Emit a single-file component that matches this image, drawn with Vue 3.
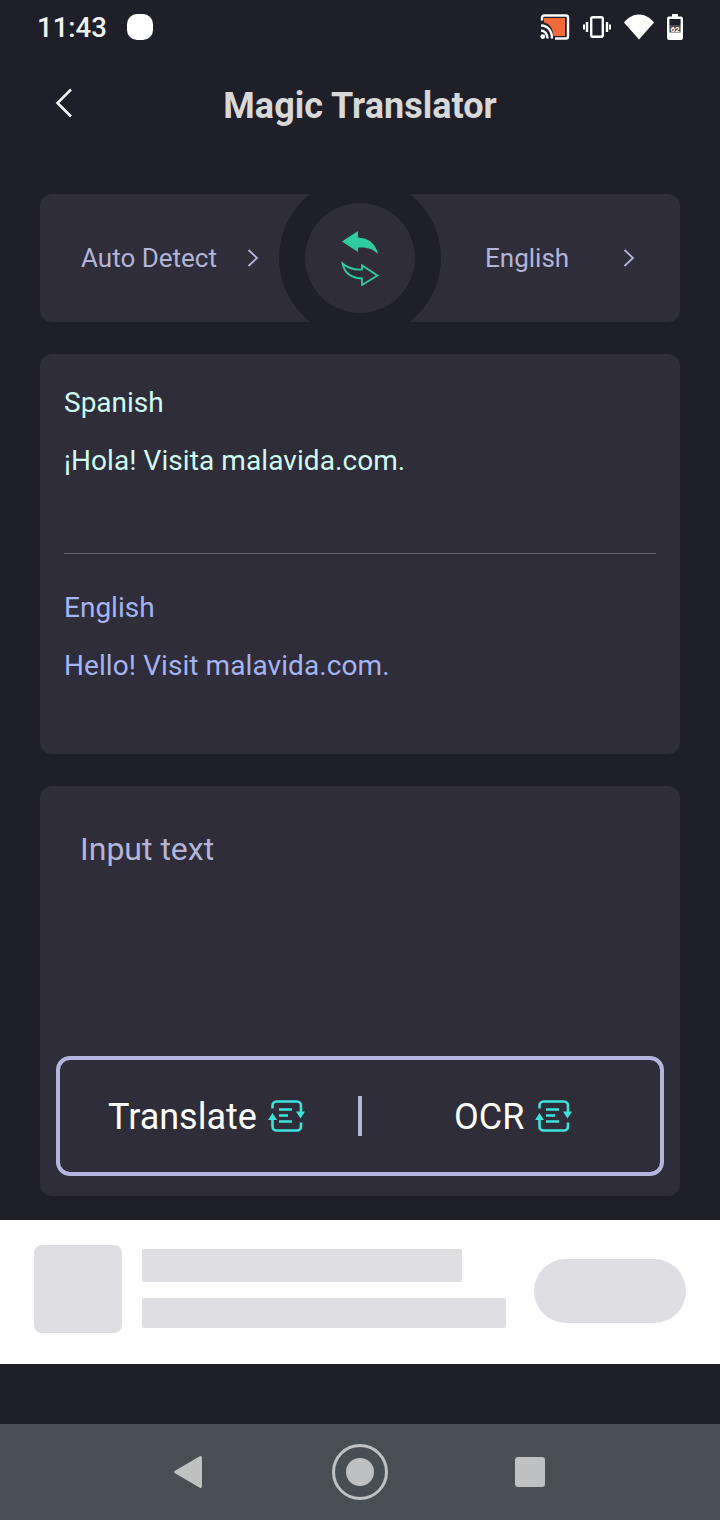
<script setup>
const statusTime = '11:43';
</script>

<template>
  <div class="screen">
    <div class="status-bar">
      <div class="status-left">
        <span class="time">{{ statusTime }}</span>
        <span class="app-dot"></span>
      </div>
      <div class="status-right">
        <svg width="30" height="26" viewBox="0 0 30 26">
          <path d="M4 1.500h22a2 2 0 0 1 2 2v19a2 2 0 0 1-2 2H15" fill="none" stroke="#fff" stroke-width="2.400"/>
          <path d="M4 1.500a2 2 0 0 0-2 2v3" fill="none" stroke="#fff" stroke-width="2.400"/>
          <path d="M4 4h21v18H13.500C13 14 9 9 4 8.500z" fill="#f26a3a"/>
          <path d="M1 11.500c6.500 0 11 5 11 13M1 16.500c3.500 0 6.500 3.500 6.500 8" fill="none" stroke="#fff" stroke-width="2.400"/>
          <circle cx="2.800" cy="22.600" r="2.400" fill="#fff"/>
        </svg>
        <svg width="28" height="22" viewBox="0 0 28 22">
          <rect x="8.200" y="1.200" width="11.600" height="19.600" rx="1.600" fill="none" stroke="#fff" stroke-width="2.400"/>
          <path d="M4 6v10M24 6v10" stroke="#fff" stroke-width="2.400"/>
          <path d="M1 8.500v5M27 8.500v5" stroke="#fff" stroke-width="2"/>
        </svg>
        <svg width="30" height="26" viewBox="0 0 30 26">
          <path d="M0 8.500C4 3.500 9 .5 15 .5s11 3 15 8L15 25.500z" fill="#fff"/>
        </svg>
        <svg width="16" height="26" viewBox="0 0 16 26">
          <path d="M5 0h6v2.500h3a2 2 0 0 1 2 2V24a2 2 0 0 1-2 2H2a2 2 0 0 1-2-2V4.500a2 2 0 0 1 2-2h3z" fill="#fff"/>
          <rect x="2.400" y="5" width="11.200" height="6" fill="#1f1f2a"/>
          <rect x="2.400" y="11" width="11.200" height="7.500" fill="#1f1f2a" opacity="0.800"/>
          <text x="8" y="18" text-anchor="middle" class="battery-text">62</text>
        </svg>
      </div>
    </div>

    <header class="app-header">
      <svg class="back" width="20" height="32" viewBox="0 0 20 32">
        <path d="M17 2.500 3.500 16 17 29.500" fill="none" stroke="#f0f0f0" stroke-width="2.600"/>
      </svg>
      <h1 class="title">Magic Translator</h1>
    </header>

    <main class="content">
      <section class="card lang-card">
        <div class="lang-side lang-left">
          <span>Auto Detect</span>
          <svg class="chev" width="12" height="20" viewBox="0 0 12 20"><path d="M1.500 2l8.500 8-8.500 8" fill="none" stroke="#b4b4d6" stroke-width="1.800"/></svg>
        </div>
        <div class="lang-side lang-right">
          <span>English</span>
          <svg class="chev" width="12" height="20" viewBox="0 0 12 20"><path d="M1.500 2l8.500 8-8.500 8" fill="none" stroke="#b4b4d6" stroke-width="1.800"/></svg>
        </div>
        <div class="swap-ring">
          <div class="swap-btn">
            <svg width="40" height="56" viewBox="0 0 40 56">
              <path d="M2 11.500 18 1v6.500c11 .5 17.500 6 20 16.500-5-5-10-7-20-6.500V22z" fill="#2ecc9f"/>
              <path d="M2.500 33.500c5 4.500 10 6.500 19.500 6V35.500l15.500 10L22 55v-6.500c-10-.5-17.500-5-19.500-15z" fill="none" stroke="#2ecc9f" stroke-width="1.800"/>
            </svg>
          </div>
        </div>
      </section>

      <section class="card result-card">
        <div class="source">
          <p class="label">Spanish</p>
          <p class="line">¡Hola! Visita malavida.com.</p>
        </div>
        <div class="divider"></div>
        <div class="target">
          <p class="label">English</p>
          <p class="line">Hello! Visit malavida.com.</p>
        </div>
      </section>

      <section class="card input-card">
        <p class="placeholder">Input text</p>
        <div class="actions">
          <div class="action action-left">
            <span>Translate</span>
            <svg class="act-icon" width="37" height="32" viewBox="0 0 37 32">
              <path d="M4.500 8.500V5.500a4 4 0 0 1 4-4h20.500a4 4 0 0 1 4 4V12M33 22.500v4a4 4 0 0 1-4 4H8.500a4 4 0 0 1-4-4V19" fill="none" stroke="#3de4dc" stroke-width="2.600"/>
              <path d="M11 9.500h13M11 15.500h9M11 21.500h13" stroke="#3de4dc" stroke-width="2.400"/>
              <path d="M0 20 4.500 13 9 20zM28 11.500h9L32.500 18.500z" fill="#3de4dc"/>
            </svg>
          </div>
          <span class="action-sep"></span>
          <div class="action action-right">
            <span>OCR</span>
            <svg class="act-icon" width="37" height="32" viewBox="0 0 37 32">
              <path d="M4.500 8.500V5.500a4 4 0 0 1 4-4h20.500a4 4 0 0 1 4 4V12M33 22.500v4a4 4 0 0 1-4 4H8.500a4 4 0 0 1-4-4V19" fill="none" stroke="#3de4dc" stroke-width="2.600"/>
              <path d="M11 9.500h13M11 15.500h9M11 21.500h13" stroke="#3de4dc" stroke-width="2.400"/>
              <path d="M0 20 4.500 13 9 20zM28 11.500h9L32.500 18.500z" fill="#3de4dc"/>
            </svg>
          </div>
        </div>
      </section>
    </main>

    <aside class="ad">
      <div class="ad-thumb"></div>
      <div class="ad-lines">
        <div class="ad-line short"></div>
        <div class="ad-line long"></div>
      </div>
      <div class="ad-pill"></div>
    </aside>

    <nav class="nav-bar">
      <svg width="32" height="34" viewBox="0 0 32 34">
        <path d="M29 2.500v29a1.500 1.500 0 0 1-2.300 1.200L2 18.300a1.500 1.500 0 0 1 0-2.600L26.700 1.300A1.500 1.500 0 0 1 29 2.500z" fill="#bdc1c2"/>
      </svg>
      <div class="nav-home"><span></span></div>
      <div class="nav-square"></div>
    </nav>
  </div>
</template>

<style>
html, body { background: #1f1f2a; }
</style>

<style scoped>
.screen {
  width: 720px;
  height: 1520px;
  background: #1f1f2a;
  display: flex;
  flex-direction: column;
  font-family: Roboto, "Liberation Sans", sans-serif;
  overflow: hidden;
}

/* Status bar */
.status-bar {
  height: 52px;
  display: flex;
  align-items: center;
  justify-content: space-between;
  padding: 2px 37px 0 37px;
  box-sizing: border-box;
}
.status-left { display: flex; align-items: center; gap: 20px; }
.time { color: #f2f2f2; font-size: 27.500px; font-weight: 500; }
.app-dot { width: 26px; height: 26px; background: #fff; border-radius: 10px; }
.status-right { display: flex; align-items: center; gap: 13px; }
.battery-text { font-size: 8px; font-weight: 700; fill: #fff; font-family: Roboto, sans-serif; }

/* Header */
.app-header {
  height: 106px;
  position: relative;
  display: flex;
  align-items: center;
  justify-content: center;
  padding-top: 2px;
  box-sizing: border-box;
}
.back { position: absolute; left: 54px; top: 35px; }
.title {
  margin: 0;
  font-size: 36px;
  font-weight: 700;
  color: #d8d8d8;
}

/* Cards */
.content {
  padding: 36px 40px 24px;
  display: flex;
  flex-direction: column;
  gap: 32px;
}
.card { background: #2e2d39; border-radius: 12px; }

.lang-card {
  height: 128px;
  position: relative;
  overflow: hidden;
  display: flex;
  color: #b4b4d6;
  font-size: 26px;
}
.lang-side { display: flex; align-items: center; height: 100%; }
.lang-left { width: 219px; padding-left: 41px; justify-content: space-between; box-sizing: border-box; }
.lang-right { margin-left: 226px; width: 150px; justify-content: space-between; }
.swap-ring {
  position: absolute;
  left: 239px;
  top: -17px;
  width: 162px;
  height: 162px;
  border-radius: 50%;
  background: #1f1f2a;
  display: flex;
  align-items: center;
  justify-content: center;
}
.swap-btn {
  width: 110px;
  height: 110px;
  border-radius: 50%;
  background: #2e2d39;
  display: flex;
  align-items: center;
  justify-content: center;
}

.result-card {
  height: 400px;
  padding: 0 24px;
  box-sizing: border-box;
  font-size: 28px;
}
.source { height: 199px; color: #d0fbf2; padding-top: 33px; box-sizing: border-box; }
.target { color: #a5b4f2; padding-top: 38px; }
.divider { height: 1px; background: #605f6c; }
.label, .line { margin: 0; line-height: 32px; }
.line { margin-top: 26px; letter-spacing: 0.08px; }

.input-card {
  height: 410px;
  padding: 0 16px 20px;
  box-sizing: border-box;
  display: flex;
  flex-direction: column;
  justify-content: space-between;
}
.placeholder {
  margin: 44px 0 0 24px;
  color: #b4b4d6;
  font-size: 32px;
  line-height: 38px;
}
.actions {
  height: 120px;
  border: 4px solid #b4b4dc;
  border-radius: 14px;
  box-sizing: border-box;
  display: flex;
  align-items: center;
  color: #fff;
  font-size: 36px;
  padding-top: 2px;
}
.action { display: flex; align-items: center; gap: 11px; }
.action-left { width: 298px; padding-left: 48px; box-sizing: border-box; }
.action-sep { width: 4px; height: 40px; background: #b4b4dc; margin-top: -2px; }
.action-right { margin-left: 92px; }
.act-icon { margin-top: -3px; }

/* Ad placeholder */
.ad {
  height: 144px;
  background: #fff;
  display: flex;
  align-items: center;
  padding: 0 34px 6px;
  box-sizing: border-box;
}
.ad-thumb { width: 88px; height: 88px; background: #dfdfe3; border-radius: 8px; }
.ad-lines { margin: -1px 0 0 20px; display: flex; flex-direction: column; gap: 16px; }
.ad-line { height: 33px; background: #dfdfe3; border-radius: 2px; }
.ad-line.short { width: 320px; }
.ad-line.long { width: 364px; height: 30px; }
.ad-pill { margin: 4px 0 0 28px; width: 152px; height: 64px; background: #dfdfe3; border-radius: 32px; }

/* Android nav */
.nav-bar {
  margin-top: 60px;
  height: 96px;
  background: #474f55;
  display: flex;
  align-items: center;
  justify-content: center;
  padding-right: 3px;
}
.nav-bar > svg { margin-right: 127px; }
.nav-home {
  width: 56px;
  height: 56px;
  border: 3px solid #bdc1c2;
  border-radius: 50%;
  box-sizing: border-box;
  display: flex;
  align-items: center;
  justify-content: center;
}
.nav-home span { width: 28px; height: 28px; border-radius: 50%; background: #bdc1c2; }
.nav-square { margin-left: 127px; width: 30px; height: 30px; border-radius: 3px; background: #bdc1c2; }
</style>
